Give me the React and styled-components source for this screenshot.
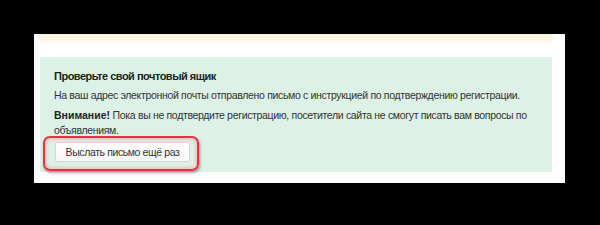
import React from "react";
import styled, { createGlobalStyle } from "styled-components";

const Global = createGlobalStyle`
  html, body { margin: 0; padding: 0; background: #000; }
  body { width: 600px; height: 225px; overflow: hidden; font-family: "Liberation Sans", Arial, sans-serif; }
`;

const Stage = styled.div`
  width: 600px;
  height: 225px;
  padding: 34px 0 0 34px;
  box-sizing: border-box;
`;

const Panel = styled.div`
  width: 531px;
  height: 149px;
  background: #fff;
  padding: 0 13px 0 6px;
  box-sizing: border-box;
  display: flex;
  flex-direction: column;
`;

const Notice = styled.div`
  height: 9px;
  background: linear-gradient(#fdf2da, #fdf6e8 70%, #fffdf8);
  margin-right: -1px;
`;

const Success = styled.div`
  margin-top: 14px;
  height: 115px;
  background: #dcf2e6;
  padding: 12px 14px 0 14px;
  box-sizing: border-box;
  color: #333;
  font-size: 10.5px;
  letter-spacing: -0.33px;
  line-height: 15px;
  display: flex;
  flex-direction: column;
  align-items: flex-start;
`;

const Title = styled.div`
  font-weight: bold;
  font-size: 11px;
  color: #222;
  letter-spacing: -0.5px;
  margin-bottom: 4px;
`;

const Para = styled.p`
  margin: 0 0 ${(p) => (p.$last ? 0 : 5)}px 0;
  b { color: #222; letter-spacing: 0; }
`;

const Highlight = styled.div`
  display: flex;
  margin: -2px 0 0 -11px;
  padding: 4px 7px 7px 10px;
  border: 2px solid #e4333f;
  border-radius: 7px;
  box-shadow: 1px 2px 3px rgba(0,0,0,0.35), inset 0 0 3px 2px rgba(240,170,175,0.6);
`;

const Button = styled.button`
  display: block;
  width: 135px;
  height: 20px;
  padding: 0;
  white-space: nowrap;
  background: linear-gradient(#fff, #f7f7f7);
  border: 1px solid #d6d6d6;
  border-radius: 2px;
  font-family: "Liberation Sans", Arial, sans-serif;
  font-size: 10.5px;
  letter-spacing: -0.4px;
  color: #333;
`;

export default function App() {
  return (
    <>
      <Global />
      <Stage>
        <Panel>
          <Notice />
          <Success>
            <Title>Проверьте свой почтовый ящик</Title>
            <Para>На ваш адрес электронной почты отправлено письмо с инструкцией по подтверждению регистрации.</Para>
            <Para $last><b>Внимание!</b> Пока вы не подтвердите регистрацию, посетители сайта не смогут писать вам вопросы по объявлениям.</Para>
            <Highlight>
              <Button>Выслать письмо ещё раз</Button>
            </Highlight>
          </Success>
        </Panel>
      </Stage>
    </>
  );
}
